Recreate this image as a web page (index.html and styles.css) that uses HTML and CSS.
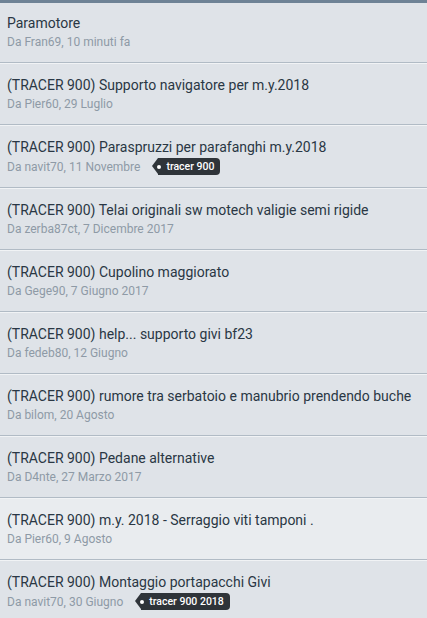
FILE: index.html
```html
<!DOCTYPE html>
<html lang="it">
<head>
<meta charset="utf-8">
<title>Discussioni</title>
<link rel="stylesheet" href="styles.css">
</head>
<body>
<ul class="threads">
  <li class="thread">
    <div class="title">Paramotore</div>
    <div class="meta">Da Fran69, 10 minuti fa</div>
  </li>
  <li class="thread">
    <div class="title">(TRACER 900) Supporto navigatore per m.y.2018</div>
    <div class="meta">Da Pier60, 29 Luglio</div>
  </li>
  <li class="thread">
    <div class="title">(TRACER 900) Paraspruzzi per parafanghi m.y.2018</div>
    <div class="meta">Da navit70, 11 Novembre <span class="tag">tracer 900</span></div>
  </li>
  <li class="thread">
    <div class="title">(TRACER 900) Telai originali sw motech valigie semi rigide</div>
    <div class="meta">Da zerba87ct, 7 Dicembre 2017</div>
  </li>
  <li class="thread">
    <div class="title">(TRACER 900) Cupolino maggiorato</div>
    <div class="meta">Da Gege90, 7 Giugno 2017</div>
  </li>
  <li class="thread">
    <div class="title">(TRACER 900) help... supporto givi bf23</div>
    <div class="meta">Da fedeb80, 12 Giugno</div>
  </li>
  <li class="thread">
    <div class="title">(TRACER 900) rumore tra serbatoio e manubrio prendendo buche</div>
    <div class="meta">Da bilom, 20 Agosto</div>
  </li>
  <li class="thread">
    <div class="title">(TRACER 900) Pedane alternative</div>
    <div class="meta">Da D4nte, 27 Marzo 2017</div>
  </li>
  <li class="thread thread-active">
    <div class="title">(TRACER 900) m.y. 2018 - Serraggio viti tamponi .</div>
    <div class="meta">Da Pier60, 9 Agosto</div>
  </li>
  <li class="thread">
    <div class="title">(TRACER 900) Montaggio portapacchi Givi</div>
    <div class="meta">Da navit70, 30 Giugno <span class="tag">tracer 900 2018</span></div>
  </li>
</ul>
</body>
</html>
```

FILE: styles.css
```css
html, body {
  margin: 0;
  padding: 0;
  background: #dfe3e8;
}

body {
  font-family: Roboto, "Liberation Sans", sans-serif;
  overflow: hidden;
}

.threads {
  list-style: none;
  margin: 0;
  padding: 0;
  border-top: 3px solid #6e8295;
}

.thread {
  padding: 12px 7px 12px;
  border-top: 1px solid #f1f3f5;
  border-bottom: 1px solid #b1bbc5;
  background: #dfe3e8;
}

.thread:first-child {
  border-top: none;
  padding-top: 11px;
}

.thread-active {
  background: #e9ecef;
}

.title {
  font-size: 14px;
  line-height: 18px;
  color: #2a3744;
  white-space: nowrap;
}

.meta {
  margin-top: 2px;
  font-size: 12px;
  line-height: 16px;
  color: #8e9aa6;
  display: flex;
  align-items: center;
}

.tag {
  position: relative;
  display: inline-block;
  margin-left: 18px;
  height: 17px;
  line-height: 17px;
  padding: 0 6px 0 8px;
  background: #2f3439;
  color: #ffffff;
  font-size: 10.5px;
  font-weight: 500;
  border-radius: 0 4px 4px 0;
}

.tag::before {
  content: "";
  position: absolute;
  left: -6px;
  top: 0;
  border-style: solid;
  border-width: 8.5px 6px 8.5px 0;
  border-color: transparent #2f3439 transparent transparent;
}

.tag::after {
  content: "";
  position: absolute;
  left: -1px;
  top: 6.5px;
  width: 4px;
  height: 4px;
  border-radius: 50%;
  background: #ffffff;
}
```
